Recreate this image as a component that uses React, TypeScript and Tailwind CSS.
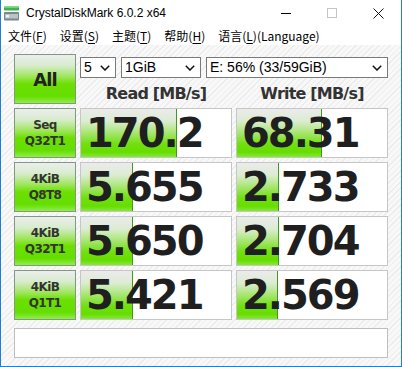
import { ReactNode } from "react";

const rows = [
  { top: "Seq", bottom: "Q32T1", read: "170.2", readBar: 96, write: "68.31", writeBar: 85 },
  { top: "4KiB", bottom: "Q8T8", read: "5.655", readBar: 52, write: "2.733", writeBar: 42 },
  { top: "4KiB", bottom: "Q32T1", read: "5.650", readBar: 52, write: "2.704", writeBar: 42 },
  { top: "4KiB", bottom: "Q1T1", read: "5.421", readBar: 52, write: "2.569", writeBar: 41 },
];

const greenButton =
  "border border-[#7f9a80] bg-[linear-gradient(to_bottom,#eceeed_0%,#d8eccd_22%,#9ee65c_45%,#6ce000_60%,#64de00_86%,#92ec4c_100%)]";

export default function App() {
  return (
    <div className="w-[402px] h-[367px] flex flex-col bg-white border-x border-b border-[#1c80d6] overflow-hidden">
      <TitleBar />
      <MenuBar />
      <div className="flex-1 pl-[13px] pt-[9px] bg-[repeating-linear-gradient(135deg,#f8f8f8_0px,#f8f8f8_3px,#ececec_3px,#ececec_4px)]">
        <div className="grid grid-cols-[62px_152px_152px] gap-x-[4px] gap-y-[4px] auto-rows-[50px]">
          <div
            className={`${greenButton} flex items-center justify-center text-[18px] font-bold tracking-[-1px] text-[#222] font-['DejaVu_Sans',sans-serif]`}
          >
            All
          </div>
          <div className="col-span-2 flex flex-col">
            <div className="mt-[3px] flex gap-[5px] h-[21px]">
              <Select width="w-[36px]">5</Select>
              <Select width="w-[80px]">1GiB</Select>
              <Select width="w-[182px]">E: 56% (33/59GiB)</Select>
            </div>
            <div className="mt-[5px] grid grid-cols-2 gap-x-[4px] leading-[21px] text-[16px] font-bold tracking-[-0.8px] text-[#333] font-['DejaVu_Sans',sans-serif]">
              <div className="text-center">Read [MB/s]</div>
              <div className="text-center">Write [MB/s]</div>
            </div>
          </div>
          {rows.map((r, i) => (
            <Row key={i} {...r} />
          ))}
        </div>
        <div className="mt-[8px] w-[374px] h-[30px] bg-white border border-[#bebebe]" />
      </div>
    </div>
  );
}

function TitleBar() {
  return (
    <div className="h-[26px] flex items-center">
      <svg className="ml-[3px] w-[15px] h-[15px]" viewBox="0 0 15 15">
        <rect x="0" y="0.5" width="15" height="4" rx="0.8" fill="#3bb54a" />
        <rect x="0" y="0.5" width="15" height="1.5" rx="0.8" fill="#6fd47a" />
        <rect x="0" y="6" width="15" height="8.5" rx="1" fill="#7b878c" />
        <rect x="1" y="8" width="13" height="4.5" fill="#b9c3c8" />
        <rect x="2" y="9" width="3" height="2.5" fill="#eef2f4" />
      </svg>
      <span className="ml-[7px] text-[12px] text-black font-['Liberation_Sans',sans-serif]">
        CrystalDiskMark 6.0.2 x64
      </span>
      <div className="ml-auto flex h-full">
        <div className="w-[46px] flex items-center justify-center">
          <div className="w-[10px] h-px bg-black" />
        </div>
        <div className="w-[46px] flex items-center justify-center">
          <div className="w-[10px] h-[10px] border border-[#c4c4c4]" />
        </div>
        <div className="w-[46px] flex items-center justify-center">
          <svg width="11" height="11" viewBox="0 0 11 11">
            <path d="M0.5 0.5 L10.5 10.5 M10.5 0.5 L0.5 10.5" stroke="#111" strokeWidth="1" />
          </svg>
        </div>
      </div>
    </div>
  );
}

function MenuBar() {
  const items: [string, string, string][] = [
    ["文件(", "F", ")"],
    ["设置(", "S", ")"],
    ["主题(", "T", ")"],
    ["帮助(", "H", ")"],
    ["语言(", "L", ")(Language)"],
  ];
  return (
    <div className="h-[19px] flex items-center gap-[13px] pl-[7px] text-[12px] text-black font-['Noto_Sans_CJK_SC',sans-serif]">
      {items.map(([a, k, b]) => (
        <span key={k}>
          {a}
          <span className="underline underline-offset-2">{k}</span>
          {b}
        </span>
      ))}
    </div>
  );
}

function Select({ width, children }: { width: string; children: ReactNode }) {
  return (
    <div
      className={`${width} h-full flex items-center justify-between pl-[3px] pr-[5px] bg-white border border-[#7a7a7a] text-[14px] text-black font-['Liberation_Sans',sans-serif]`}
    >
      <span>{children}</span>
      <svg width="10" height="6" viewBox="0 0 10 6">
        <polyline points="0.8,0.8 5,5 9.2,0.8" fill="none" stroke="#111" strokeWidth="1.5" />
      </svg>
    </div>
  );
}

function Row(r: {
  top: string;
  bottom: string;
  read: string;
  readBar: number;
  write: string;
  writeBar: number;
}) {
  return (
    <>
      <div
        className={`${greenButton} flex flex-col items-center justify-center leading-[16px] text-[12px] font-bold tracking-[-0.6px] text-[#333] font-['DejaVu_Sans',sans-serif]`}
      >
        <span>{r.top}</span>
        <span>{r.bottom}</span>
      </div>
      <Value text={r.read} bar={r.readBar} />
      <Value text={r.write} bar={r.writeBar} />
    </>
  );
}

function Value({ text, bar }: { text: string; bar: number }) {
  return (
    <div className="relative flex items-center bg-white border border-[#c6c6c6]">
      <div
        className="absolute left-0 top-0 bottom-0 border-r border-[#3f9a24] bg-[linear-gradient(to_bottom,#ebebeb_0%,#dcecd2_25%,#a6e670_50%,#72e010_72%,#66dd00_90%,#86e83a_100%)]"
        style={{ width: bar }}
      />
      <span className="relative pl-[5px] text-[40px] leading-none font-bold tracking-[-2px] text-[#1f1f1f] font-['DejaVu_Sans',sans-serif]">
        {text}
      </span>
    </div>
  );
}
